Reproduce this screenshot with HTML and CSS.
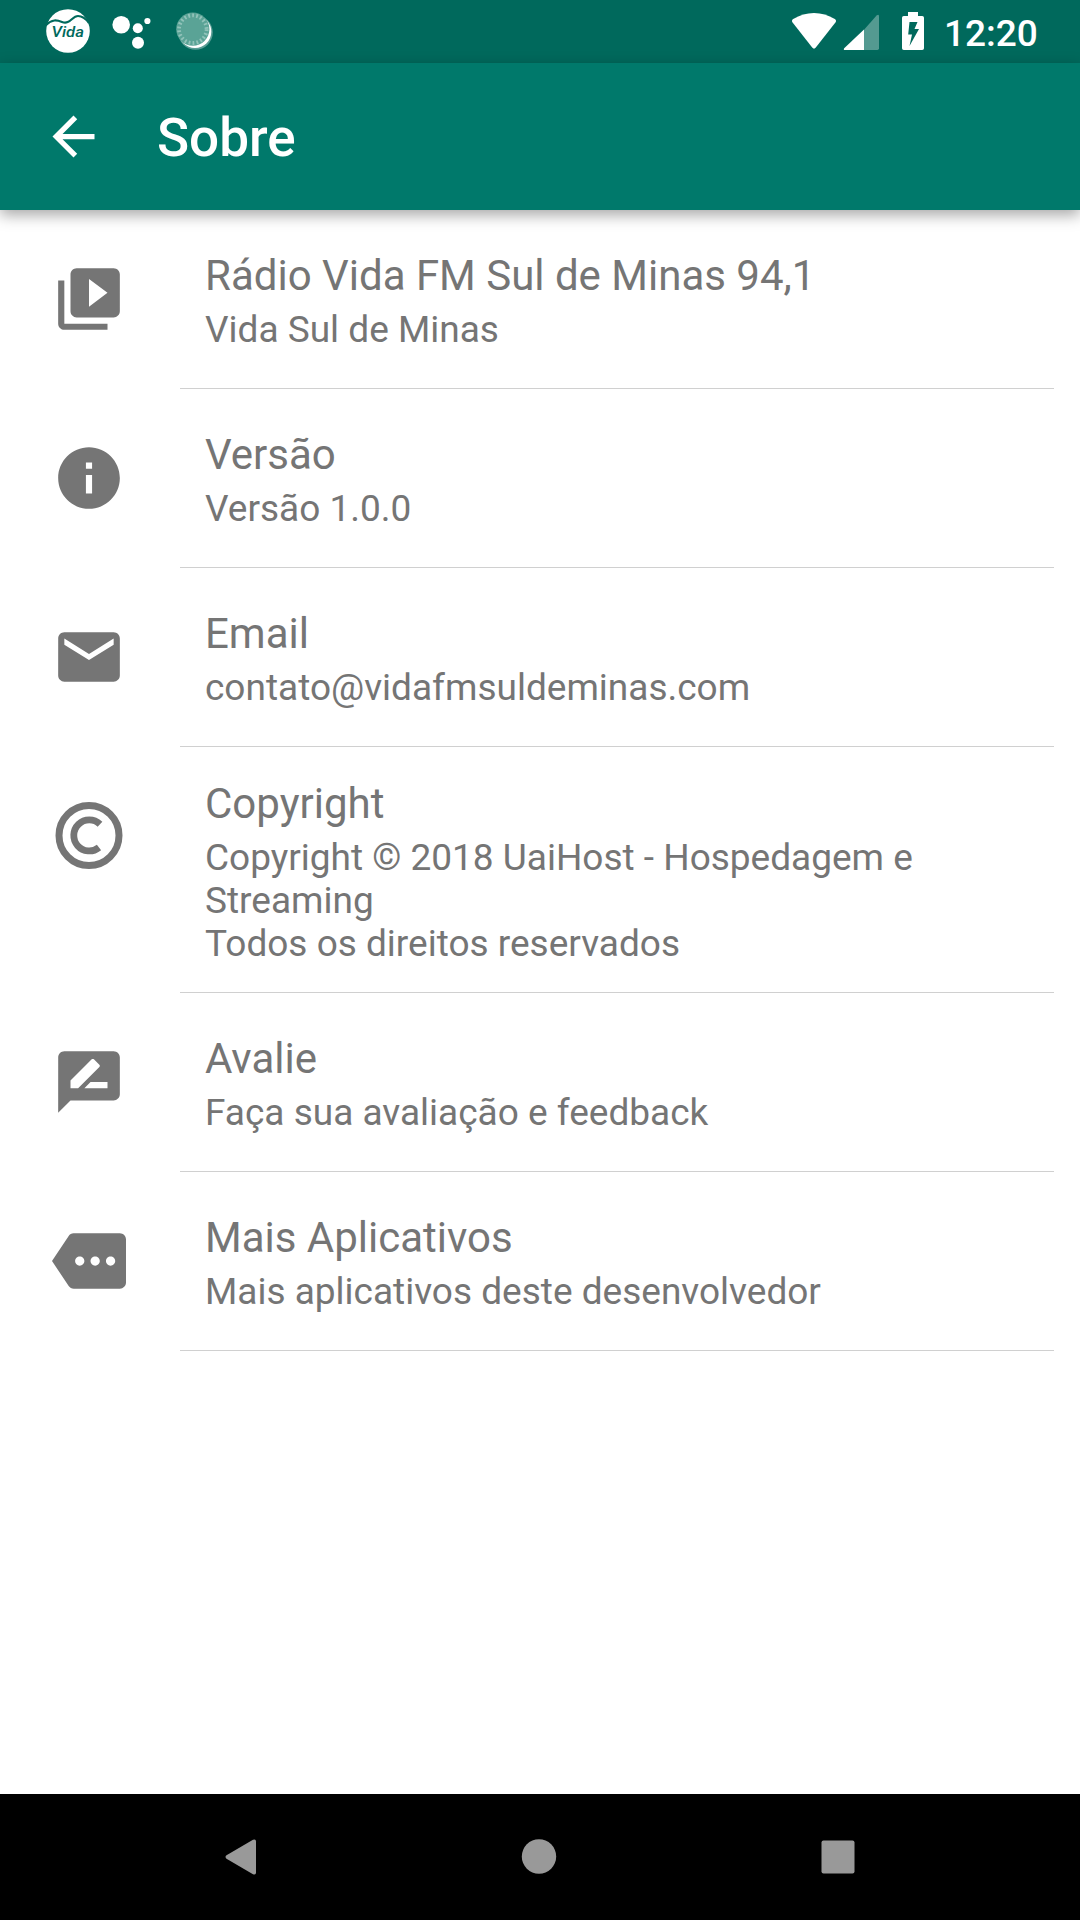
FILE: index.html
```
<!DOCTYPE html>
<html lang="pt-BR">
<head>
    <meta charset="UTF-8">
    <meta name="viewport" content="width=device-width, initial-scale=1.0">
    <title>Sobre</title>
    <link rel="stylesheet" href="styles.css">
</head>
<body>

    <!-- Status bar -->
    <div class="status-bar">
        <svg class="status-left" width="230" height="63" viewBox="0 0 230 63">
            <circle cx="68" cy="31" r="21.8" fill="#fff"/>
            <path d="M46 25C52 19 57 20 62 22C70 25 72 16 78 16C82 16 86 19 89 23" fill="none" stroke="#00695c" stroke-width="2.2"/>
            <text class="logo-text" x="51.5" y="37" textLength="32.5" lengthAdjust="spacingAndGlyphs">Vida</text>
            <g fill="#fff">
                <circle cx="121.2" cy="24.8" r="8.8"/>
                <circle cx="137.8" cy="28.3" r="5"/>
                <circle cx="147.4" cy="21" r="3.1"/>
                <circle cx="138" cy="42.7" r="6"/>
            </g>
            <circle cx="195.5" cy="32.5" r="17.3" fill="#fff" opacity=".35"/>
            <circle cx="195" cy="31.8" r="16.3" fill="#fff"/>
            <circle cx="192.8" cy="29.2" r="16.6" fill="#5aa396"/>
            <circle cx="192.8" cy="29.2" r="13.8" fill="none" stroke="#92c3ba" stroke-width="3.8" stroke-dasharray="1.8 2.2"/>
        </svg>
        <svg class="status-right" width="160" height="63" viewBox="780 0 160 63">
            <path d="M792.6 22.6Q791 20.5 793.2 19Q803 13 814 13T834.8 19Q837 20.5 835.4 22.6L815.8 47.6Q814 49.8 812.2 47.6Z" fill="#fff"/>
            <path d="M864 29.8L876.6 15.6Q879 13.6 879 16.5V48.3Q879 50 877.3 50H864Z" fill="#fff" opacity=".33"/>
            <path d="M864 29.6V50H845Q843 50 844.2 48.2Z" fill="#fff"/>
            <path fill-rule="evenodd" d="M908 12H918V16H922.2Q924 16 924 17.8V48.2Q924 50 922.2 50H903.8Q902 50 902 48.2V17.8Q902 16 903.8 16H908ZM909.5 22L908.2 34.5H912L909.5 46L919 29H914.5L917.5 22Z" fill="#fff"/>
        </svg>
        <span class="clock">12:20</span>
    </div>

    <!-- Toolbar -->
    <div class="toolbar">
        <svg class="back-icon" viewBox="0 0 24 24"><path d="M20 11H7.83l5.59-5.59L12 4l-8 8 8 8 1.41-1.41L7.83 13H20v-2z"/></svg>
        <h1>Sobre</h1>
    </div>

    <!-- About list -->
    <div class="list">
        <div class="item">
            <svg class="icon" viewBox="0 0 24 24"><path d="M4 6H2v14c0 1.100.9 2 2 2h14v-2H4V6zm16-4H8c-1.100 0-2 .9-2 2v12c0 1.100.9 2 2 2h12c1.100 0 2-.9 2-2V4c0-1.100-.9-2-2-2zm-8 12.500v-9l6 4.500-6 4.500z"/></svg>
            <div class="item-text">
                <h2>Rádio Vida FM Sul de Minas 94,1</h2>
                <p>Vida Sul de Minas</p>
            </div>
        </div>
        <div class="item">
            <svg class="icon" viewBox="0 0 24 24"><path d="M12 2C6.480 2 2 6.480 2 12s4.480 10 10 10 10-4.480 10-10S17.520 2 12 2zm1 15h-2v-6h2v6zm0-8h-2V7h2v2z"/></svg>
            <div class="item-text">
                <h2>Versão</h2>
                <p>Versão 1.0.0</p>
            </div>
        </div>
        <div class="item">
            <svg class="icon" viewBox="0 0 24 24"><path d="M20 4H4c-1.100 0-1.990.9-1.990 2L2 18c0 1.100.9 2 2 2h16c1.100 0 2-.9 2-2V6c0-1.100-.9-2-2-2zm0 4l-8 5-8-5V6l8 5 8-5v2z"/></svg>
            <div class="item-text">
                <h2>Email</h2>
                <p>contato@vidafmsuldeminas.com</p>
            </div>
        </div>
        <div class="item item-tall">
            <svg class="icon icon-line" viewBox="0 0 74 74">
                <circle cx="37" cy="36.500" r="30" stroke-width="7"/>
                <path d="M48 25.200A15.500 15.500 0 1 0 47 48.500" stroke-width="6.800"/>
            </svg>
            <div class="item-text">
                <h2>Copyright</h2>
                <p>Copyright © 2018 UaiHost - Hospedagem e<br>Streaming<br>Todos os direitos reservados</p>
            </div>
        </div>
        <div class="item">
            <svg class="icon" viewBox="0 0 24 24"><path d="M20 2H4c-1.100 0-1.990.9-1.990 2L2 22l4-4h14c1.100 0 2-.9 2-2V4c0-1.100-.9-2-2-2zM6 14v-2.470l6.880-6.880c.2-.2.510-.2.710 0l1.770 1.770c.2.2.2.510 0 .710L8.470 14H6zm12 0h-7.500l2-2H18v2z"/></svg>
            <div class="item-text">
                <h2>Avalie</h2>
                <p>Faça sua avaliação e feedback</p>
            </div>
        </div>
        <div class="item">
            <svg class="icon" viewBox="0 0 24 24"><path d="M22 3H7c-.690 0-1.230.350-1.590.880L0 12l5.410 8.110c.360.530.970.890 1.660.890H22c1.100 0 2-.9 2-2V5c0-1.100-.9-2-2-2zM9 13.500c-.830 0-1.500-.670-1.500-1.500s.670-1.500 1.500-1.500 1.500.670 1.500 1.500-.670 1.500-1.500 1.500zm5 0c-.830 0-1.500-.670-1.500-1.500s.670-1.500 1.500-1.500 1.500.670 1.500 1.500-.670 1.500-1.500 1.500zm5 0c-.830 0-1.500-.670-1.500-1.500s.670-1.500 1.500-1.500 1.500.670 1.500 1.500-.670 1.500-1.500 1.500z"/></svg>
            <div class="item-text">
                <h2>Mais Aplicativos</h2>
                <p>Mais aplicativos deste desenvolvedor</p>
            </div>
        </div>
    </div>

    <!-- Navigation bar -->
    <div class="nav-bar">
        <svg viewBox="0 0 40 40"><path d="M6.500 21.700Q4.500 20 6.500 18.300L33 2.800Q36 1.500 36 4.500V35.500Q36 38.500 33 37.200Z"/></svg>
        <svg viewBox="0 0 40 40"><circle cx="20" cy="19.500" r="17.200"/></svg>
        <svg viewBox="0 0 40 40"><rect x="3.500" y="3.500" width="33" height="33" rx="2"/></svg>
    </div>

</body>
</html>
```
FILE: styles.css
```
* {
    margin: 0;
    padding: 0;
    box-sizing: border-box;
    font-family: Roboto, sans-serif;
}

body {
    background: #fff;
    height: 100vh;
    display: flex;
    flex-direction: column;
    overflow: hidden;
}

.status-bar {
    height: 63px;
    background: #00695c;
    display: flex;
    align-items: center;
    padding-right: 42px;
}

.status-right {
    margin-left: auto;
}

.logo-text {
    font-size: 15px;
    font-weight: 500;
    font-style: italic;
    fill: #00695c;
}

.clock {
    width: 94px;
    margin-left: 4px;
    font-size: 37px;
    font-weight: 500;
    line-height: 43px;
    padding-top: 3px;
    color: #fff;
}

.toolbar {
    height: 147px;
    background: #00796b;
    display: flex;
    align-items: center;
    padding-left: 42px;
    box-shadow: 0 5px 14px rgba(0, 0, 0, 0.35);
}

.back-icon {
    width: 63px;
    height: 63px;
    fill: #fff;
}

.toolbar h1 {
    margin-left: 52px;
    padding-top: 3px;
    font-size: 53px;
    font-weight: 500;
    color: #fff;
}

.list {
    flex: 1;
}

.item {
    height: 179px;
    display: flex;
    align-items: flex-start;
    padding-right: 26px;
}

.item-tall {
    height: 246px;
}

.icon {
    width: 74px;
    height: 74px;
    margin: 52px 54px 0 52px;
    fill: #757575;
    flex-shrink: 0;
}

.icon-line {
    fill: none;
    stroke: #757575;
}

.item-text {
    flex: 1;
    height: 100%;
    padding: 41px 0 0 25px;
    color: #757575;
    border-bottom: 1px solid #d0d0d0;
}

.item-tall .item-text {
    padding-top: 32px;
}

.item-text h2 {
    font-size: 42px;
    font-weight: 400;
    line-height: 49px;
}

.item-text p {
    margin-top: 8px;
    font-size: 37px;
    line-height: 43px;
}

.nav-bar {
    height: 126px;
    background: #000;
    display: flex;
    justify-content: center;
    align-items: center;
    gap: 259px;
    padding-right: 2px;
}

.nav-bar svg {
    width: 40px;
    height: 40px;
    fill: #999;
}
```
